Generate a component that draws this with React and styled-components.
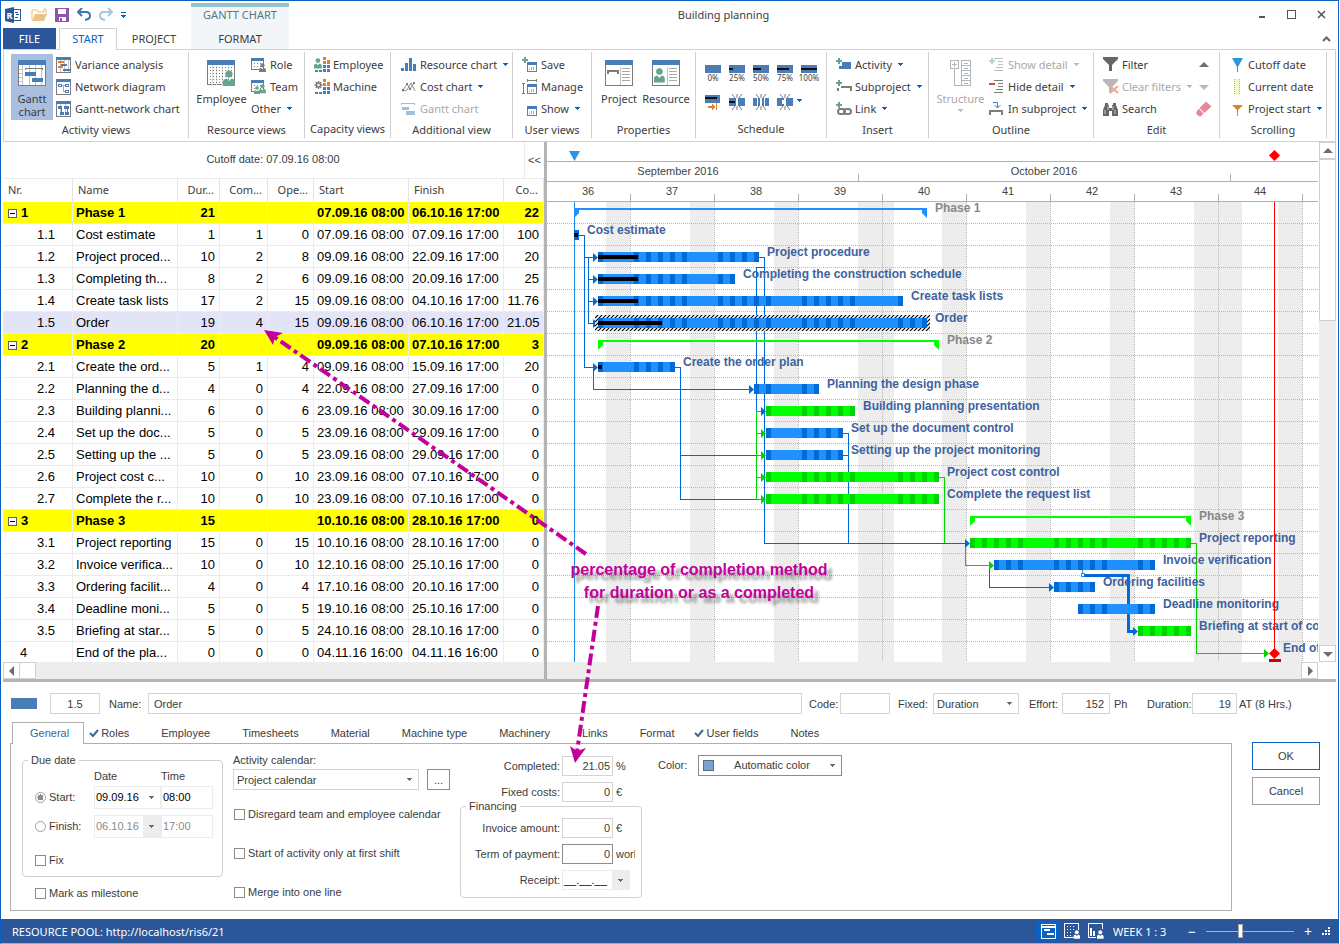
import React, { useState } from "react";
import styled, { createGlobalStyle } from "styled-components";

const UI_FONT = `"Noto Sans", "Open Sans", sans-serif`;
const FORM_FONT = `"Liberation Sans", Arial, sans-serif`;

const GlobalStyle = createGlobalStyle`
  * {
    box-sizing: border-box;
  }
  body {
    margin: 0;
    background: #fff;
    color: #3c3c3c;
    font-family: ${UI_FONT};
    font-size: 11px;
  }
  button, input, select {
    font: inherit;
    color: inherit;
    margin: 0;
    padding: 0;
    border: 0;
    border-radius: 0;
    background: none;
    outline: none;
  }
`;

/* ---------- window ---------- */

const Window = styled.div`
  position: relative;
  display: flex;
  flex-direction: column;
  min-height: 100vh;
  margin-right: 1px;
  border: 1px solid #0a62c4;
  border-bottom-color: #8fb0df;
  overflow: hidden;
`;

const Svg = styled.svg.attrs({ shapeRendering: "crispEdges" })`
  display: block;
  flex: none;
`;

const SmoothSvg = styled.svg`
  display: block;
  flex: none;
`;

const Header = styled.header`
  display: flex;
  height: 48px;
  padding: 0 2px;
`;

const HeaderLeft = styled.div`
  display: flex;
  flex-direction: column;
  width: 188px;
`;

const QuickBar = styled.div`
  display: flex;
  align-items: center;
  gap: 8px;
  height: 27px;
  padding-left: 2px;
`;

const QuickButton = styled.button`
  width: ${(p) => p.$width || 14}px;
`;

const RibbonTabs = styled.nav`
  display: flex;
  height: 21px;
`;

const RibbonTab = styled.button`
  font-size: 11px;
  line-height: 20px;
`;

const FileTab = styled(RibbonTab)`
  width: 53px;
  color: #fff;
  background: #2b579a;
`;

const ActiveTab = styled(RibbonTab)`
  position: relative;
  width: 58px;
  height: 22px;
  margin-left: 3px;
  padding-bottom: 2px;
  border: 1px solid #d0d0d0;
  border-bottom: 0;
  color: #0a62c4;
  background: #fff;
`;

const PlainTab = styled(RibbonTab)`
  width: 74px;
`;

const ContextTab = styled.div`
  display: flex;
  flex-direction: column;
  align-items: center;
  width: 98px;
  margin-top: 2px;
  border-top: 4px solid #98c2d0;
  background: #f2f6f9;
`;

const ContextTitle = styled.span`
  height: 22px;
  line-height: 15px;
  color: #5a7684;
`;

const Title = styled.div`
  flex: 1;
  padding-top: 6px;
  line-height: 16px;
  text-align: center;
`;

const HeaderRight = styled.div`
  display: flex;
  flex-direction: column;
  align-items: flex-end;
  justify-content: space-between;
  width: 178px;
  padding: 8px 5px 7px 0;
`;

const WindowButtons = styled.div`
  display: flex;
  align-items: center;
  gap: 21px;
  padding-right: 5px;
`;

/* ---------- ribbon ---------- */

const RibbonBar = styled.section`
  display: flex;
  height: 93px;
  margin: 0 2px;
  padding: 2px 0 3px;
  border: 1px solid #d0d0d0;
`;

const Group = styled.div`
  display: flex;
  flex-direction: column;
  flex: 0 0 ${(p) => p.$width}px;
  border-right: 1px solid #d0d0d0;
  padding-top: 2px;
`;

const GroupBody = styled.div`
  display: flex;
  gap: ${(p) => p.$gap || 3}px;
  height: 66px;
  padding-left: ${(p) => p.$pad}px;
`;

const GroupTitle = styled.div`
  line-height: 19px;
  text-align: center;
`;

const BigButton = styled.button`
  display: flex;
  flex-direction: column;
  align-items: center;
  gap: 6px;
  width: ${(p) => p.$width}px;
  height: 66px;
  padding-top: 6px;
  line-height: 13px;
  white-space: nowrap;
  background: ${(p) => (p.$active ? "#aabfe0" : "none")};
  color: ${(p) => (p.disabled ? "#a8a8a8" : "inherit")};
`;

const BigLabel = styled.span`
  display: flex;
  flex-direction: column;
  align-items: center;
  gap: 4px;
  text-align: center;
`;

const ToolColumn = styled.div`
  display: flex;
  flex-direction: column;
  flex: none;
`;

const ToolButton = styled.button`
  display: flex;
  align-items: center;
  gap: 3px;
  height: 22px;
  padding-bottom: 1px;
  white-space: nowrap;
  color: ${(p) => (p.disabled ? "#a8a8a8" : "inherit")};
`;

const IconSlot = styled.span`
  display: flex;
  justify-content: ${(p) => (p.$center ? "center" : "flex-start")};
  width: 16px;
`;

const ToolCaret = styled.span`
  padding-left: 3px;
`;

const StepGrid = styled.div`
  display: grid;
  grid-template-columns: repeat(5, 24px);
  grid-template-rows: 29px 22px;
  padding-top: 7px;
`;

const StepButton = styled.button`
  display: flex;
  flex-direction: column;
  align-items: center;
  font-size: 8px;
  line-height: 10px;
  padding-top: 4px;
`;

const EditSide = styled.div`
  display: grid;
  grid-template-rows: repeat(3, 22px);
  place-items: center;
  flex: 1;
  padding-right: 6px;
`;

/* ---------- table ---------- */

const Main = styled.main`
  display: flex;
  margin: 0 2px;
`;

const TablePane = styled.section`
  width: 541px;
`;

const CutoffBar = styled.div`
  display: flex;
  height: 36px;
  font-family: ${FORM_FONT};
  line-height: 35px;
  text-align: center;
`;

const CutoffText = styled.div`
  flex: 1;
  padding-left: 19px;
`;

const CollapseButton = styled.button`
  width: 20px;
  border-left: 1px solid #ececec;
`;

const Table = styled.table`
  width: 541px;
  table-layout: fixed;
  border-collapse: separate;
  border-spacing: 0;
`;

const Th = styled.th`
  height: 24px;
  padding: 0 5px 2px 5px;
  border-top: 1px solid #ececec;
  border-right: 1px solid #e4e4e4;
  font-weight: normal;
  line-height: 18px;
  text-align: ${(p) => (p.$right ? "right" : "left")};
`;

const Tr = styled.tr`
  font-family: ${FORM_FONT};
  font-size: 13px;
  color: #000;
  font-weight: ${(p) => (p.$phase ? "bold" : "normal")};
  background: ${(p) => (p.$phase ? "#ff0" : p.$selected ? "#e4e4f8" : "#fff")};
`;

const Td = styled.td`
  height: 22px;
  padding: 1px 4px 0 3px;
  border-right: 1px solid #ececec;
  border-bottom: 1px solid #ececec;
  line-height: 20px;
  white-space: nowrap;
  overflow: hidden;
  text-align: ${(p) => (p.$right ? "right" : "left")};
  tr:last-child & {
    height: 20px;
    padding-top: 2px;
    border-bottom: 0;
    line-height: 18px;
  }
`;

const NumberCell = styled.div`
  display: flex;
  align-items: center;
  gap: 4px;
  padding-left: ${(p) => p.$indent}px;
`;

const Toggle = styled.button`
  display: flex;
  align-items: center;
  justify-content: center;
  width: 9px;
  height: 9px;
  border: 1px solid #5c5c80;
  background: #fff;
  &::before {
    content: "";
    width: 5px;
    height: 1px;
    background: #000;
  }
`;

const Splitter = styled.div`
  width: 3px;
  background: #b4b4b4;
`;

const BottomSplitter = styled.div`
  height: 3px;
  margin: 0 2px;
  background: #b4b4b4;
`;

/* ---------- scroll bars ---------- */

const HScroll = styled.div`
  display: flex;
  justify-content: ${(p) => (p.$end ? "flex-end" : "flex-start")};
  height: 17px;
  background: #ededed;
`;

const VScroll = styled.div`
  display: flex;
  flex-direction: column;
  width: 17px;
  margin: 0 0 17px 1px;
  background: #ededed;
`;

const ScrollButton = styled.button`
  display: flex;
  align-items: center;
  justify-content: center;
  width: 17px;
  height: 17px;
  border: 1px solid #d0d0d0;
  background: #fff;
`;

const HThumb = styled.div`
  width: 16px;
  border: 1px solid #d0d0d0;
  border-left: 0;
  background: #fff;
`;

const VThumb = styled.div`
  height: 162px;
  border: 1px solid #d0d0d0;
  background: #fff;
`;

const Spring = styled.div`
  flex: 1;
`;

/* ---------- gantt ---------- */

const ChartPane = styled.section`
  flex: 1;
  min-width: 0;
  overflow: hidden;
`;

const ChartSvg = styled.svg`
  display: block;
  width: 100%;
  font-family: ${FORM_FONT};
`;

/* ---------- details ---------- */

const Details = styled.section`
  display: flex;
  flex-direction: column;
  flex: 1;
  margin: 0 2px;
  padding: 11px 0 8px 7px;
  font-family: ${FORM_FONT};
`;

const TopFields = styled.div`
  display: flex;
  align-items: center;
  height: 21px;
  padding-left: 1px;
`;

const Swatch = styled.span`
  width: 26px;
  height: 11px;
  margin-right: 13px;
  background: #4a7db5;
`;

const FieldLabel = styled.label`
  flex: none;
  width: ${(p) => p.$width}px;
  margin-left: ${(p) => p.$gap}px;
  white-space: nowrap;
`;

const Unit = styled.span`
  width: ${(p) => p.$width}px;
  padding-left: ${(p) => p.$pad}px;
  white-space: nowrap;
`;

const TextBox = styled.input`
  flex: ${(p) => (p.$width ? "none" : 1)};
  width: ${(p) => (p.$width ? `${p.$width}px` : "auto")};
  min-width: 0;
  height: 21px;
  padding: 0 5px;
  border: 1px solid ${(p) => p.$border || "#d4d4d4"};
  text-align: ${(p) => p.$align || "left"};
`;

const SelectFrame = styled.span`
  display: flex;
  align-items: center;
  width: ${(p) => p.$width}px;
  height: 21px;
  padding: 0 6px 0 3px;
  border: 1px solid ${(p) => p.$border || "#d4d4d4"};
`;

const Select = styled.select`
  flex: 1;
  min-width: 0;
  appearance: none;
  text-align: ${(p) => p.$align || "left"};
  text-align-last: ${(p) => p.$align || "left"};
`;

const ColorChip = styled.span`
  width: 11px;
  height: 11px;
  margin-left: 1px;
  border: 1px solid #5a6a80;
  background: #7da0d0;
`;

const DetailBody = styled.div`
  display: flex;
  gap: 20px;
  flex: 1;
  padding-top: 8px;
`;

const TabArea = styled.div`
  display: flex;
  flex-direction: column;
  flex: 1;
`;

const TabStrip = styled.nav`
  display: flex;
  height: 21px;
  padding-left: 2px;
`;

const Tab = styled.button`
  display: flex;
  align-items: center;
  gap: 2px;
  height: 22px;
  padding: 0 15px 0 ${(p) => (p.$checked ? 5 : 17)}px;
  white-space: nowrap;
`;

const CurrentTab = styled(Tab)`
  position: relative;
  padding: 0 14px 1px 17px;
  border: 1px solid #b0b0b0;
  border-bottom: 0;
  color: #40649c;
  background: #fff;
`;

const TabPanel = styled.div`
  display: flex;
  flex: 1;
  min-height: 168px;
  padding: 10px 11px 0;
  border: 1px solid #b0b0b0;
`;

const Column = styled.div`
  display: flex;
  flex-direction: column;
  width: ${(p) => p.$width}px;
  margin-right: 10px;
`;

const Fieldset = styled.fieldset`
  min-width: 0;
  margin: 0;
  padding: 0;
  border: 1px solid #d0d0d0;
  border-radius: 4px;
`;

const Legend = styled.legend`
  margin-left: 5px;
  padding: 0 3px;
  line-height: ${(p) => p.$line || 12}px;
`;

const DueGrid = styled.div`
  display: grid;
  grid-template-columns: 59px 67px 52px;
  grid-template-rows: 20px 22px 36px 32px;
  align-items: center;
  padding-left: 12px;
`;

const CheckLabel = styled.label`
  display: flex;
  align-items: center;
  gap: 3px;
  height: ${(p) => p.$height || 22}px;
  padding-left: ${(p) => p.$pad || 0}px;
  white-space: nowrap;
`;

const OptionList = styled.div`
  display: grid;
  gap: 17px;
  padding-left: 1px;
`;

const Check = styled.input.attrs({ type: "checkbox" })`
  appearance: none;
  width: 11px;
  height: 11px;
  border: 1px solid #8c8c8c;
`;

const Radio = styled.input.attrs({ type: "radio" })`
  appearance: none;
  width: 11px;
  height: 11px;
  border: 1px solid #a0a0a0;
  border-radius: 50%;
  &:checked {
    background: radial-gradient(circle, #8c8c8c 0 3px, #fff 3px);
  }
`;

const DateBox = styled.span`
  display: flex;
  height: 23px;
  border: 1px solid #ececec;
  color: ${(p) => (p.$off ? "#8a8a8a" : "#000")};
`;

const DateInput = styled.input`
  flex: 1;
  width: 0;
  min-width: 0;
  padding-left: 1px;
`;

const DropButton = styled.button`
  display: flex;
  align-items: center;
  justify-content: center;
  width: 17px;
  background: ${(p) => (p.$off ? "#ededed" : "#fff")};
`;

const CalendarLabel = styled.label`
  line-height: 12px;
`;

const CalendarRow = styled.div`
  display: flex;
  justify-content: space-between;
  margin: 3px 0 13px;
`;

const MoreButton = styled.button`
  width: 23px;
  border: 1px solid #8c8c8c;
`;

const AmountRow = styled.div`
  display: grid;
  grid-template-columns: ${(p) => p.$label || 101}px 51px 1fr;
  align-items: center;
  column-gap: 1px;
  height: 20px;
  margin-bottom: 6px;
  white-space: nowrap;
`;

const AmountLabel = styled.label`
  padding-right: 1px;
  text-align: right;
`;

const AmountBox = styled(TextBox)`
  height: 20px;
  padding-right: 2px;
`;

const AmountUnit = styled.span`
  width: 21px;
  padding-left: 2px;
  overflow: hidden;
`;

const ReceiptBox = styled(DateBox)`
  width: 68px;
  height: 20px;
`;

const MoneyFieldset = styled(Fieldset)`
  margin-top: -6px;
  height: 96px;
`;

const MoneyRows = styled.div`
  padding-top: ${(p) => p.$top}px;
`;

const ColorField = styled.div`
  display: flex;
  align-items: center;
  height: 22px;
  padding-left: 6px;
`;

const DialogButtons = styled.div`
  display: flex;
  flex-direction: column;
  gap: 7px;
  padding: 20px 16px 0 0;
`;

const DialogButton = styled.button`
  width: 68px;
  height: 28px;
  border: 1px solid ${(p) => (p.$primary ? "#0a62c4" : "#a0a0a0")};
`;

/* ---------- status bar ---------- */

const StatusBar = styled.footer`
  display: flex;
  align-items: center;
  height: 24px;
  padding: 0 6px 0 11px;
  color: #fff;
  background: #2b579a;
`;

const StatusButton = styled.button`
  display: flex;
  align-items: center;
  justify-content: center;
  width: 24px;
  height: 20px;
  background: ${(p) => (p.$active ? "#0a62c4" : "none")};
`;

const Scale = styled.span`
  width: 70px;
  padding-left: 5px;
  display: flex;
  align-items: center;
  justify-content: space-between;
`;

const ZoomButton = styled.button`
  width: 28px;
  font-size: 14px;
`;

const ZoomSlider = styled.input.attrs({ type: "range" })`
  appearance: none;
  width: 88px;
  height: 14px;
  background: linear-gradient(#9db4d6, #9db4d6) center / 100% 1px no-repeat;
  &::-webkit-slider-thumb {
    appearance: none;
    width: 5px;
    height: 14px;
    border: 1px solid #a8a8a8;
    background: #fff;
  }
`;

/* ---------- callout over the window ---------- */

const CalloutArrows = styled.svg`
  position: absolute;
  left: -1px;
  top: -1px;
  width: 700px;
  height: 800px;
  pointer-events: none;
`;

const CalloutText = styled.div`
  position: absolute;
  left: 558px;
  top: 557px;
  width: 280px;
  color: #c4009c;
  font-family: ${FORM_FONT};
  font-size: 16px;
  font-weight: bold;
  line-height: 23px;
  text-align: center;
  text-shadow: 5px 5px 3px rgba(0, 0, 0, 0.4);
  white-space: nowrap;
  pointer-events: none;
`;

/* ---------- icons ---------- */

const BLUE = "#4a7db5";
const GRAY = "#7c7c7c";
const GREEN = "#66a58c";
const ORANGE = "#e57e24";

const Caret = ({ color = "#0a62c4" }) => (
  <Svg width="5" height="3">
    <path d="M0 0h5v1h-1v1h-1v1h-1v-1h-1v-1h-1z" fill={color} />
  </Svg>
);

const Triangle = ({ dir, color = "#6e6e6e" }) => {
  const shapes = {
    up: "M0 7L5 2L10 7z",
    down: "M0 3H10L5 8z",
    left: "M2 5L7 0V10z",
    right: "M8 5L3 0V10z",
  };
  return (
    <SmoothSvg width="10" height="10">
      <path d={shapes[dir]} fill={color} />
    </SmoothSvg>
  );
};

const Frame = ({ w, h, head, children }) => (
  <Svg width={w} height={h}>
    <rect x=".5" y=".5" width={w - 1} height={h - 1} fill="#fff" stroke={GRAY} />
    {children}
    <rect width={w} height={head} fill={BLUE} />
  </Svg>
);

const Person = ({ x, y, s = 1, color = GREEN }) => (
  <g transform={`translate(${x} ${y}) scale(${s})`} shapeRendering="auto" fill={color}>
    <circle cx="6" cy="4" r="3.6" />
    <path d="M0 16V12Q0 9 3.5 8.4L6 11L8.500 8.4Q12 9 12 12V16z" />
  </g>
);

const GanttBig = () => (
  <Frame w={28} h={26} head={5}>
    <path d="M4.500 5v20M11.500 5v20M17.500 5v20M23.500 5v20M1 9.500h3M1 13.500h3M1 17.500h3M1 21.500h3" stroke="#c4c4c4" />
    <path d="M7.500 10V8.500H24.500V10" fill="none" stroke={GRAY} />
    <rect x="7" y="12" width="11" height="4" fill={BLUE} />
    <rect x="14" y="18" width="11" height="4" fill={BLUE} />
  </Frame>
);

const VarianceIcon = () => (
  <Frame w={15} h={16} head={3}>
    <path d="M4.500 3v12M8.500 3v12M12.500 3v12" stroke="#c4c4c4" />
    <rect x="2" y="4" width="6" height="2" fill={ORANGE} />
    <rect x="5" y="7" width="6" height="2" fill={BLUE} />
    <rect x="2" y="9" width="5" height="2" fill={ORANGE} />
    <rect x="7" y="12" width="7" height="2" fill={BLUE} />
  </Frame>
);

const NetworkIcon = () => (
  <Frame w={15} h={16} head={3}>
    <path d="M5 6.500h4M7.500 6v7M7 12.500h2" stroke="#aaa" fill="none" />
    <rect x="2.500" y="5.500" width="3" height="2" fill="#fff" stroke={BLUE} />
    <rect x="9.500" y="5.500" width="3" height="2" fill="#fff" stroke={BLUE} />
    <rect x="9.500" y="11.500" width="3" height="2" fill="#fff" stroke={BLUE} />
  </Frame>
);

const GanttNetIcon = () => (
  <Frame w={15} h={16} head={3}>
    <path d="M4.500 3v12M9.500 3v12" stroke="#c4c4c4" />
    <path d="M2 5h4v3H2zM8 5h5v3H8zM4 11h4v3H4zM9 11h4v3H9zM5 8h1v3H5zM11 8h1v3h-1z" fill={BLUE} />
  </Frame>
);

const dots = (w, h, step, top) => {
  const out = [];
  for (let y = top; y < h - 2; y += step)
    for (let x = 3; x < w - 2; x += step) out.push(`M${x} ${y}h1v1h-1z`);
  return out.join("");
};

const EmployeeBig = () => (
  <Svg width="29" height="26">
    <rect x=".5" y=".5" width="27" height="24" fill="#fff" stroke={GRAY} />
    <path d="M5.500 5v20M9.500 5v20M15.500 5v20M21.500 5v20" stroke="#dcdcdc" />
    <path d={dots(28, 26, 3, 7)} fill={GRAY} />
    <rect width="28" height="5" fill={BLUE} />
    <Person x={16} y={10} />
  </Svg>
);

const RoleIcon = ({ team }) => (
  <Svg width="15" height="14">
    <rect x=".5" y=".5" width="12" height="11" fill="#fff" stroke={GRAY} />
    <path d={dots(13, 12, 3, 5)} fill={GRAY} />
    <rect width="13" height="3" fill={BLUE} />
    {team && <Person x={3} y={6} s={0.5} />}
    <Person x={8} y={team ? 4 : 5} s={0.58} color={team ? GREEN : GRAY} />
  </Svg>
);

const CapacityIcon = ({ machine }) => (
  <Svg width="16" height="16">
    {machine ? (
      <g shapeRendering="auto">
        <path d="M4.500 2v8M.5 6h8M1.700 3.200l5.600 5.600M7.300 3.200l-5.600 5.600" stroke={GRAY} strokeWidth="1.500" />
        <circle cx="4.500" cy="6" r="2" fill="#fff" stroke={GRAY} strokeWidth="1.500" />
      </g>
    ) : (
      <Person x={0} y={1} s={0.65} />
    )}
    <path d="M9 0h3v3H9zM9 4h3v3H9zM13 3h3v4h-3z" fill={ORANGE} />
    <path d="M9 8h3v3H9zM13 8h3v3h-3zM1 13h3v2H1zM5 13h3v2H5zM9 12h3v3H9zM13 12h3v3h-3z" fill={BLUE} />
  </Svg>
);

const ColumnsIcon = () => (
  <Svg width="15" height="13">
    <path d="M0 10h3v3H0zM4 5h3v8H4zM8 0h3v13H8zM12 6h3v7h-3z" fill={BLUE} />
  </Svg>
);

const CostIcon = () => (
  <SmoothSvg width="15" height="13">
    <path d="M2 10L6 4L9 9L13 3M1 11L6 10L10 3L14 11" fill="none" stroke="#8c8c8c" />
    <path d="M1 9h2v2H1zM5 3h2v2H5zM8 8h2v2H8zM12 2h2v2h-2z" fill={GRAY} />
  </SmoothSvg>
);

const GanttChartIcon = () => (
  <Svg width="15" height="12">
    <path d="M.5 2V.5H13.500V2" fill="none" stroke="#b8b8b8" />
    <path d="M1 4h7v3H1zM5 8h9v4H5z" fill="#a3c0dc" />
  </Svg>
);

const ViewIcon = ({ kind }) => (
  <Svg width="16" height="16">
    <rect x="5.500" y="6.500" width="9" height="8" fill="#fff" stroke={GRAY} />
    <rect x="5" y="5" width="10" height="3" fill={BLUE} />
    <path d="M7 12h1v1H7zM9 10h1v3H9zM11 10h1v3h-1z" fill="#9ab" />
    {kind === "save" && <path d="M2 0h2v2h2v2H4v2H2V4H0V2h2z" fill={GREEN} />}
    {kind === "manage" && (
      <path d="M5.500 0v3M14.500 0v3M5 1.500h10M0 4.500h3M1.500 4v11M0 14.500h3" stroke={GRAY} fill="none" />
    )}
  </Svg>
);

const ProjectBig = ({ person }) => (
  <Frame w={28} h={26} head={5}>
    {person ? <Person x={2} y={8} s={0.9} /> : (
      <path d="M2 10h12v4h-2v-2H4v2H2z" fill={GRAY} />
    )}
    <path d="M15.500 7v18" stroke="#c4c4c4" />
    <path d="M17 8.500h8M17 11.500h8M17 14.500h8M17 17.500h8M17 20.500h8" stroke="#aaa" />
  </Frame>
);

const StepIcon = ({ done }) => (
  <Svg width="16" height="8">
    <rect width="16" height="8" fill={BLUE} />
    <rect y="3" width={(done * 16) / 100} height="2" fill="#111" />
  </Svg>
);

const MoveIcon = () => (
  <Svg width="16" height="16">
    <rect width="15" height="8" y="1" fill={BLUE} />
    <rect y="3" width="12" height="2" fill="#111" />
    <path d="M11.500 9v7" stroke={ORANGE} />
    <path d="M3 12h4v-2l4 3l-4 3v-2H3z" fill={ORANGE} />
  </Svg>
);

const SplitIcon = ({ kind }) => (
  <Svg width="16" height="16">
    <path d="M3 0l3 4M8 0v4M13 0l-3 4M3 16l3-4M8 16v-4M13 16l-3-4" stroke={GRAY} shapeRendering="auto" />
    <path d="M0 4h7v8H0zM9 4h7v8H9z" fill={BLUE} />
    {kind === 0 && <rect y="7" width="6" height="2" fill="#111" />}
    {kind === 1 && <path d="M4 4h1v8H4zM11 4h1v8h-1z" fill="#fff" />}
    {kind === 2 && <path d="M5 6h4v4H5z" fill="#fff" />}
  </Svg>
);

const InsertIcon = ({ kind }) => (
  <Svg width="16" height="14">
    {kind === "activity" && <path d="M6 4h9v7H3V8h3z" fill={BLUE} />}
    {kind === "sub" && <path d="M5 6h11v5h-2V8H3v3H1V8h4z" fill={GRAY} />}
    {kind === "link" && (
      <g fill="none" stroke={GRAY} strokeWidth="2" shapeRendering="auto">
        <rect x="2" y="7" width="7" height="5" rx="2.500" />
        <rect x="8" y="7" width="7" height="5" rx="2.500" />
      </g>
    )}
    <path d="M2 0h2v2h2v2H4v2H2V4H0V2h2z" fill={GREEN} />
  </Svg>
);

const StructureBig = () => (
  <Svg width="21" height="26" fill="none" stroke="#b4b4b4">
    <rect x=".5" y=".5" width="8" height="8" />
    <path d="M4.500 2v5M2 4.500h5M4.500 9v16.500h7" />
    <path d="M11.500 .5h9v25h-9zM12 5.500h8M12 10.500h8M12 15.500h8M12 20.500h8" />
    <path d="M14 3.500h4M14 8.500h4M14 13.500h4M14 18.500h4M14 23.500h4" stroke="#9ab8d8" />
  </Svg>
);

const DetailIcon = ({ hide }) => (
  <Svg width="14" height="14">
    <path d="M5 .5h9M9 3.500h5M9 6.500h5M7 9.500h7M5 12.500h9" stroke={hide ? GRAY : "#c0c0c0"} />
    {hide ? <rect y="3" width="6" height="2" fill="#d0502c" /> : (
      <path d="M2 0h2v2h2v2H4v2H2V4H0V2h2z" fill="#b4d4c6" />
    )}
  </Svg>
);

const SubprojectIcon = () => (
  <Svg width="14" height="15">
    <path d="M0 9h14v5h-2v-3H2v3H0z" fill={GRAY} />
    <path d="M4 1.500h4.500V7M5.500 4l3 3l3-3" stroke={BLUE} fill="none" shapeRendering="auto" />
  </Svg>
);

const FunnelIcon = ({ off }) => (
  <SmoothSvg width="16" height="15">
    <path d="M0 0H15V2L9 8V14H6V8L0 2z" fill={off ? "#b8b8b8" : "#666"} />
    {off && <path d="M7 7L15 14M15 7L7 14" stroke="#eeaa96" strokeWidth="2" />}
  </SmoothSvg>
);

const BinocularsIcon = () => (
  <SmoothSvg width="15" height="14">
    <path d="M2 1h3v2h1v3h3V3h1V1h3v2l2 5v6H9V9H6v5H0V8l2-5z" fill="#666" />
    <path d="M2 8v4M5 4v4M10 4v4M12 8v4" stroke="#ccc" />
  </SmoothSvg>
);

const EraserIcon = () => (
  <SmoothSvg width="16" height="16">
    <path d="M10 .5L15.500 5.500L8.500 12L3.500 7z" fill="#e8869a" />
    <path d="M3 7.800L7.500 12.500L4.500 15.500Q3 16 0 12.500Q0 10.500 3 7.800z" fill="#e8869a" />
  </SmoothSvg>
);

const PinIcon = ({ color, small }) => (
  <SmoothSvg width="11" height="14">
    <path d={small ? "M0 3H11L6 8V14H5V8z" : "M0 0H11L6 9V14H5V9z"} fill={color} />
  </SmoothSvg>
);

const TodayIcon = () => (
  <Svg width="6" height="16">
    <rect width="6" height="16" fill="#f2f8c8" />
    <path d="M.5 0v16M5.500 0v16" stroke="#b0b0b0" strokeDasharray="1 1" />
  </Svg>
);

const AppIcon = () => (
  <SmoothSvg width="16" height="16">
    <rect x="8" y="2" width="8" height="12" fill="#2b579a" />
    <rect x="9" y="3" width="6" height="10" fill="#fff" />
    <path d="M10 5.500h3M11 7.500h3M10 10.500h3" stroke="#2b579a" />
    <path d="M0 2L9 0V16L0 14z" fill="#2b579a" />
    <text x="1.500" y="11.500" fontSize="9" fontWeight="bold" fill="#fff">R</text>
  </SmoothSvg>
);

const FolderIcon = () => (
  <SmoothSvg width="17" height="14">
    <path d="M1 12V2h5l1 2h6V1h2v5" fill="#fff" stroke="#e8c07c" />
    <path d="M4 6H16L13 13H1z" fill="#ecc486" />
  </SmoothSvg>
);

const SaveIcon = () => (
  <Svg width="14" height="14">
    <path d="M0 0h14v14H0z" fill="#8c55aa" />
    <path d="M3 1h8v5H3zM4 9h7v4H4z" fill="#fff" />
    <rect x="5" y="10" width="2" height="3" fill="#8c55aa" />
  </Svg>
);

const UndoIcon = ({ redo }) => (
  <SmoothSvg width="14" height="13">
    <g transform={redo ? "translate(14 0) scale(-1 1)" : undefined} stroke={redo ? "#aac4de" : "#3c78b8"} fill="none" strokeWidth="2">
      <path d="M5 0L1 4L5 8" />
      <path d="M1 4H9Q13 4 13 8Q13 11 8 12" />
    </g>
  </SmoothSvg>
);

const TickIcon = () => (
  <SmoothSvg width="10" height="8">
    <path d="M1 4L4 7L9 1" fill="none" stroke="#40688c" strokeWidth="2" />
  </SmoothSvg>
);

/* ---------- ribbon parts ---------- */

const Tool = ({ icon, label, caret, off, center }) => (
  <ToolButton disabled={off}>
    {icon && <IconSlot $center={center}>{icon}</IconSlot>}
    {label}
    {caret && (
      <ToolCaret>
        <Caret color={off ? "#b8b8b8" : undefined} />
      </ToolCaret>
    )}
  </ToolButton>
);

const RibbonGroup = ({ title, width, pad, gap, children }) => (
  <Group $width={width}>
    <GroupBody $pad={pad} $gap={gap}>
      {children}
    </GroupBody>
    <GroupTitle>{title}</GroupTitle>
  </Group>
);

const Ribbon = () => (
  <RibbonBar>
    <RibbonGroup title="Activity views" width={185} pad={7}>
      <BigButton $width={42} $active>
        <GanttBig />
        <BigLabel>
          <span>Gantt<br />chart</span>
        </BigLabel>
      </BigButton>
      <ToolColumn>
        <Tool icon={<VarianceIcon />} label="Variance analysis" />
        <Tool icon={<NetworkIcon />} label="Network diagram" />
        <Tool icon={<GanttNetIcon />} label="Gantt-network chart" />
      </ToolColumn>
    </RibbonGroup>
    <RibbonGroup title="Resource views" width={116} pad={8} gap={5}>
      <BigButton $width={49}>
        <EmployeeBig />
        <BigLabel>Employee</BigLabel>
      </BigButton>
      <ToolColumn>
        <Tool icon={<RoleIcon />} label="Role" />
        <Tool icon={<RoleIcon team />} label="Team" />
        <Tool label="Other" caret />
      </ToolColumn>
    </RibbonGroup>
    <RibbonGroup title="Capacity views" width={86} pad={9}>
      <ToolColumn>
        <Tool icon={<CapacityIcon />} label="Employee" />
        <Tool icon={<CapacityIcon machine />} label="Machine" />
      </ToolColumn>
    </RibbonGroup>
    <RibbonGroup title="Additional view" width={122} pad={10}>
      <ToolColumn>
        <Tool icon={<ColumnsIcon />} label="Resource chart" caret />
        <Tool icon={<CostIcon />} label="Cost chart" caret />
        <Tool icon={<GanttChartIcon />} label="Gantt chart" off />
      </ToolColumn>
    </RibbonGroup>
    <RibbonGroup title="User views" width={79} pad={9}>
      <ToolColumn>
        <Tool icon={<ViewIcon kind="save" />} label="Save" />
        <Tool icon={<ViewIcon kind="manage" />} label="Manage" />
        <Tool icon={<ViewIcon />} label="Show" caret />
      </ToolColumn>
    </RibbonGroup>
    <RibbonGroup title="Properties" width={104} pad={8} gap={4}>
      <BigButton $width={38}>
        <ProjectBig />
        <BigLabel>Project</BigLabel>
      </BigButton>
      <BigButton $width={48}>
        <ProjectBig person />
        <BigLabel>Resource</BigLabel>
      </BigButton>
    </RibbonGroup>
    <RibbonGroup title="Schedule" width={131} pad={5}>
      <StepGrid>
        {[0, 25, 50, 75, 100].map((n) => (
          <StepButton key={n}>
            <StepIcon done={n} />
            {n}%
          </StepButton>
        ))}
        <StepButton aria-label="Move"><MoveIcon /></StepButton>
        {[0, 1, 2].map((n) => (
          <StepButton key={n} aria-label="Split"><SplitIcon kind={n} /></StepButton>
        ))}
        <ToolButton aria-label="More"><Caret /></ToolButton>
      </StepGrid>
    </RibbonGroup>
    <RibbonGroup title="Insert" width={102} pad={9}>
      <ToolColumn>
        <Tool icon={<InsertIcon kind="activity" />} label="Activity" caret />
        <Tool icon={<InsertIcon kind="sub" />} label="Subproject" caret />
        <Tool icon={<InsertIcon kind="link" />} label="Link" caret />
      </ToolColumn>
    </RibbonGroup>
    <RibbonGroup title="Outline" width={165} pad={8} gap={5}>
      <BigButton $width={47} disabled>
        <StructureBig />
        <BigLabel>
          Structure
          <Caret color="#b8b8b8" />
        </BigLabel>
      </BigButton>
      <ToolColumn>
        <Tool icon={<DetailIcon />} label="Show detail" caret off />
        <Tool icon={<DetailIcon hide />} label="Hide detail" caret />
        <Tool icon={<SubprojectIcon />} label="In subproject" caret />
      </ToolColumn>
    </RibbonGroup>
    <RibbonGroup title="Edit" width={126} pad={9}>
      <ToolColumn>
        <Tool icon={<FunnelIcon />} label="Filter" />
        <Tool icon={<FunnelIcon off />} label="Clear filters" caret off />
        <Tool icon={<BinocularsIcon />} label="Search" />
      </ToolColumn>
      <EditSide>
        <button aria-label="Previous"><Triangle dir="up" /></button>
        <button aria-label="Next"><Triangle dir="down" color="#b8b8b8" /></button>
        <button aria-label="Erase"><EraserIcon /></button>
      </EditSide>
    </RibbonGroup>
    <RibbonGroup title="Scrolling" width={107} pad={9}>
      <ToolColumn>
        <Tool icon={<PinIcon color="#2e93e0" />} label="Cutoff date" center />
        <Tool icon={<TodayIcon />} label="Current date" center />
        <Tool icon={<PinIcon color={ORANGE} small />} label="Project start" caret center />
      </ToolColumn>
    </RibbonGroup>
  </RibbonBar>
);

/* ---------- activities ---------- */

const columns = [
  { title: "Nr.", width: 70 },
  { title: "Name", width: 105 },
  { title: "Dur...", width: 42, right: true },
  { title: "Com...", width: 48, right: true },
  { title: "Ope...", width: 46, right: true },
  { title: "Start", width: 95 },
  { title: "Finish", width: 95 },
  { title: "Co...", width: 40, right: true },
];

const activities = [
  ["1", "Phase 1", "21", "", "", "07.09.16 08:00", "06.10.16 17:00", "22"],
  ["1.1", "Cost estimate", "1", "1", "0", "07.09.16 08:00", "07.09.16 17:00", "100"],
  ["1.2", "Project proced...", "10", "2", "8", "09.09.16 08:00", "22.09.16 17:00", "20"],
  ["1.3", "Completing th...", "8", "2", "6", "09.09.16 08:00", "20.09.16 17:00", "25"],
  ["1.4", "Create task lists", "17", "2", "15", "09.09.16 08:00", "04.10.16 17:00", "11.76"],
  ["1.5", "Order", "19", "4", "15", "09.09.16 08:00", "06.10.16 17:00", "21.05"],
  ["2", "Phase 2", "20", "", "", "09.09.16 08:00", "07.10.16 17:00", "3"],
  ["2.1", "Create the ord...", "5", "1", "4", "09.09.16 08:00", "15.09.16 17:00", "20"],
  ["2.2", "Planning the d...", "4", "0", "4", "22.09.16 08:00", "27.09.16 17:00", "0"],
  ["2.3", "Building planni...", "6", "0", "6", "23.09.16 08:00", "30.09.16 17:00", "0"],
  ["2.4", "Set up the doc...", "5", "0", "5", "23.09.16 08:00", "29.09.16 17:00", "0"],
  ["2.5", "Setting up the ...", "5", "0", "5", "23.09.16 08:00", "29.09.16 17:00", "0"],
  ["2.6", "Project cost c...", "10", "0", "10", "23.09.16 08:00", "07.10.16 17:00", "0"],
  ["2.7", "Complete the r...", "10", "0", "10", "23.09.16 08:00", "07.10.16 17:00", "0"],
  ["3", "Phase 3", "15", "", "", "10.10.16 08:00", "28.10.16 17:00", "0"],
  ["3.1", "Project reporting", "15", "0", "15", "10.10.16 08:00", "28.10.16 17:00", "0"],
  ["3.2", "Invoice verifica...", "10", "0", "10", "12.10.16 08:00", "25.10.16 17:00", "0"],
  ["3.3", "Ordering facilit...", "4", "0", "4", "17.10.16 08:00", "20.10.16 17:00", "0"],
  ["3.4", "Deadline moni...", "5", "0", "5", "19.10.16 08:00", "25.10.16 17:00", "0"],
  ["3.5", "Briefing at star...", "5", "0", "5", "24.10.16 08:00", "28.10.16 17:00", "0"],
  ["4", "End of the pla...", "0", "0", "0", "04.11.16 16:00", "04.11.16 16:00", "0"],
];

const isPhase = (row) => row[1].startsWith("Phase");

const ActivityTable = () => {
  const [selected, setSelected] = useState("1.5");
  return (
    <Table>
      <colgroup>
        {columns.map((c) => (
          <col key={c.title} width={c.width} />
        ))}
      </colgroup>
      <thead>
        <tr>
          {columns.map((c) => (
            <Th key={c.title} $right={c.right}>{c.title}</Th>
          ))}
        </tr>
      </thead>
      <tbody>
        {activities.map((row) => {
          const phase = isPhase(row);
          const indent = phase ? 2 : row[0].includes(".") ? 31 : 14;
          return (
            <Tr key={row[0]} $phase={phase} $selected={row[0] === selected} onClick={() => setSelected(row[0])}>
              <Td>
                <NumberCell $indent={indent}>
                  {phase && <Toggle aria-label="Collapse" />}
                  {row[0]}
                </NumberCell>
              </Td>
              {row.slice(1).map((cell, i) => (
                <Td key={i} $right={columns[i + 1].right}>{cell}</Td>
              ))}
            </Tr>
          );
        })}
      </tbody>
    </Table>
  );
};

/* ---------- chart: 12 px a day, weeks start at x = 83 + 84 k ---------- */

const ROW = 22;
const DAY = 12;
const WEEK0 = -1;
const weeks = Array.from({ length: 24 }, (_, i) => WEEK0 + i * 84);
const holidays = [335, 671, 683];

const palette = {
  blue: { light: "#1e90ff", dark: "#006ad6" },
  green: { light: "#00ff00", dark: "#00d400" },
};

// day counts run from Monday 5 September 2016
const bars = [
  { row: 1, from: 2, to: 2, done: 4, tone: "blue", label: "Cost estimate" },
  { row: 2, from: 4, to: 17, done: 40, tone: "blue", label: "Project procedure" },
  { row: 3, from: 4, to: 15, done: 40, tone: "blue", label: "Completing the construction schedule" },
  { row: 4, from: 4, to: 29, done: 40, tone: "blue", label: "Create task lists" },
  { row: 5, from: 4, to: 31, done: 64, tone: "blue", label: "Order", selected: true },
  { row: 7, from: 4, to: 10, done: 4, tone: "blue", label: "Create the order plan" },
  { row: 8, from: 17, to: 22, tone: "blue", label: "Planning the design phase" },
  { row: 9, from: 18, to: 25, tone: "green", label: "Building planning presentation" },
  { row: 10, from: 18, to: 24, tone: "blue", label: "Set up the document control" },
  { row: 11, from: 18, to: 24, tone: "blue", label: "Setting up the project monitoring" },
  { row: 12, from: 18, to: 32, tone: "green", label: "Project cost control" },
  { row: 13, from: 18, to: 32, tone: "green", label: "Complete the request list" },
  { row: 15, from: 35, to: 53, tone: "green", label: "Project reporting" },
  { row: 16, from: 37, to: 50, tone: "blue", label: "Invoice verification" },
  { row: 17, from: 42, to: 45, tone: "blue", label: "Ordering facilities" },
  { row: 18, from: 44, to: 50, tone: "blue", label: "Deadline monitoring" },
  { row: 19, from: 49, to: 53, tone: "green", label: "Briefing at start of construction" },
];

const phases = [
  { row: 0, from: 2, to: 31, color: "#1e90ff", label: "Phase 1" },
  { row: 6, from: 4, to: 32, color: "#00ff00", label: "Phase 2" },
  { row: 14, from: 35, to: 53, color: "#00ff00", label: "Phase 3" },
];

const links = [
  ["blue", "M32 33.500H37.500V165.500H47M37.500 55.500H47M41.500 55.500V121.500H47M41.500 77.500H47M41.500 99.500H47"],
  ["blue", "M46.500 168V187.500H203"],
  ["blue", "M128 165.500H133.500V297.500H210M133.500 253.500H210"],
  ["blue", "M212 55.500H217.500V341.500H419M217 65.500H209.500V209"],
  ["blue", "M296 231.500H301.500V341M296 253.500H301"],
  ["green", "M215 209.500H209.500V297.500H215M210 231.500H215M210 253.500H215M210 275.500H215"],
  ["green", "M392 275.500H397.500V341"],
  ["green", "M422 341.500H418.500V363.500H443"],
  ["blue", "M442.500 363V385.500H503"],
  ["green", "M644 341.500H649.500V451.500H718"],
];

const arrows = [
  ["blue", 46, 55], ["blue", 46, 77], ["blue", 46, 99], ["blue", 46, 121], ["blue", 46, 165],
  ["blue", 202, 187], ["blue", 214, 209], ["green", 214, 231], ["green", 214, 253],
  ["green", 214, 275], ["green", 214, 297], ["blue", 418, 341], ["green", 442, 363],
  ["blue", 502, 385], ["blue", 586, 429], ["green", 717, 451],
];

const barStart = (day) => WEEK0 + day * DAY + 4;
const barEnd = (day) => WEEK0 + day * DAY + 9;

const isWorkday = (day) =>
  day % 7 < 5 && !holidays.includes(WEEK0 + day * DAY);

const workdays = (from, to) => {
  const days = [];
  for (let d = from; d <= to; d++) if (isWorkday(d)) days.push(d);
  return days;
};

const ChartHeader = () => (
  <ChartSvg height="60" fontSize="11" fill="#444" textAnchor="middle">
    <path d="M0 19.500H3000M0 39.500H3000M0 59.500H3000" stroke="#b0b0b0" />
    <path d="M311.500 32v7M683.500 32v7" stroke="#b0b0b0" />
    <path d="M22 9H33L27.500 19z" fill="#2e93e0" />
    <path d="M727.500 8L733 13.500L727.500 19L722 13.500z" fill="#f00" />
    <text x="131" y="33">September 2016</text>
    <text x="497" y="33">October 2016</text>
    {weeks.map((x) => (
      <path key={x} d={`M${x + 84}.5 52v7`} stroke="#b0b0b0" />
    ))}
    {weeks.slice(0, 9).map((x, i) => (
      <text key={x} x={x + 42} y="53">{36 + i}</text>
    ))}
  </ChartSvg>
);

const Bar = ({ bar }) => {
  const y = bar.row * ROW + 6;
  const x = barStart(bar.from);
  const end = barEnd(bar.to);
  const tone = palette[bar.tone];
  return (
    <g shapeRendering="crispEdges">
      {bar.selected && <rect x={x - 3} y={y - 3} width={end - x + 6} height="16" fill="url(#hatch)" />}
      <rect x={x} y={y} width={end - x} height="10" fill={tone.light} />
      {workdays(bar.from, bar.to).map((d) => (
        <rect key={d} x={barStart(d)} y={y} width="5" height="10" fill={tone.dark} />
      ))}
      {bar.done && <rect x={x} y={y + 3} width={bar.done} height="4" fill="#000" />}
    </g>
  );
};

const Chart = () => (
  <ChartSvg height="460" fontSize="12" fontWeight="bold">
    <defs>
      <pattern id="hatch" width="4" height="4" patternUnits="userSpaceOnUse">
        <rect width="4" height="4" fill="#fff" />
        <path d="M-1 5L5 -1M-1 1L1 -1M3 5L5 3" stroke="#000" strokeWidth="1.200" />
      </pattern>
    </defs>
    <g shapeRendering="crispEdges">
      {weeks.map((x) => (
        <rect key={x} x={x + 60} width="24" height="460" fill="#ededed" />
      ))}
      {holidays.map((x) => (
        <rect key={x} x={x} width="12" height="460" fill="#ededed" />
      ))}
      {weeks.map((x) => (
        <path key={x} d={`M${x + 84}.5 0V460`} stroke="#b8b8b8" strokeDasharray="1 1" />
      ))}
      {activities.slice(1).map((row, i) => (
        <path key={row[0]} d={`M0 ${i * ROW + 21}.5H3000`} stroke="#b8b8b8" strokeDasharray="1 1" />
      ))}
      <path d="M27.500 0V460" stroke="#1e8ce0" />
      {links.map(([tone, d]) => (
        <path key={d} d={d} fill="none" stroke={palette[tone].dark} />
      ))}
      <path d="M535.500 368v4M534 371.500h3v3h-3z" fill="#fff" stroke="#1e90ff" />
      <path d="M537 373.500H581.500V429.500H587" fill="none" stroke="#006ad6" strokeWidth="3" />
    </g>
    {arrows.map(([tone, x, y]) => (
      <path key={`${x}-${y}`} d={`M${x} ${y - 4}L${x + 5} ${y + 0.5}L${x} ${y + 5}z`} fill={palette[tone].dark} />
    ))}
    {phases.map((p) => {
      const a = barStart(p.from);
      const b = barEnd(p.to);
      const y = p.row * ROW + 6;
      return (
        <path
          key={p.label}
          d={`M${a} ${y}H${b}V${y + 10}L${b - 5} ${y + 5}V${y + 2}H${a + 5}V${y + 5}L${a} ${y + 10}z`}
          fill={p.color}
        />
      );
    })}
    {bars.map((bar) => (
      <Bar key={bar.label} bar={bar} />
    ))}
    {phases.map((p) => (
      <text key={p.label} x={barEnd(p.to) + 8} y={p.row * ROW + 10} fill="#888">{p.label}</text>
    ))}
    {bars.map((b) => (
      <text key={b.label} x={barEnd(b.to) + 8} y={b.row * ROW + 10} fill="#3e629e">{b.label}</text>
    ))}
    <text x="736" y="450" fill="#3e629e">End of the planning</text>
    <path d="M727.500 0V452" stroke="#f00" shapeRendering="crispEdges" />
    <path d="M727.500 446L733 451.500L727.500 457L722 451.500z" fill="#f00" />
    <rect x="722" y="457" width="12" height="3" fill="#d00000" />
  </ChartSvg>
);

/* ---------- details form ---------- */

const tabs = [
  { name: "Roles", checked: true },
  { name: "Employee" },
  { name: "Timesheets" },
  { name: "Material" },
  { name: "Machine type" },
  { name: "Machinery" },
  { name: "Links" },
  { name: "Format" },
  { name: "User fields", checked: true },
  { name: "Notes" },
];

const Amount = ({ id, label, value, unit, labelWidth, border }) => (
  <AmountRow $label={labelWidth}>
    <AmountLabel htmlFor={id}>{label}</AmountLabel>
    <AmountBox id={id} defaultValue={value} $width={51} $align="right" $border={border} />
    <AmountUnit>{unit}</AmountUnit>
  </AmountRow>
);

const DetailForm = () => (
  <Details>
    <TopFields>
      <Swatch />
      <TextBox aria-label="Number" defaultValue="1.5" $width={50} $align="center" />
      <FieldLabel htmlFor="name" $width={39} $gap={9}>Name:</FieldLabel>
      <TextBox id="name" defaultValue="Order" />
      <FieldLabel htmlFor="code" $width={31} $gap={7}>Code:</FieldLabel>
      <TextBox id="code" $width={50} />
      <FieldLabel htmlFor="fixed" $width={35} $gap={8}>Fixed:</FieldLabel>
      <SelectFrame $width={86}>
        <Select id="fixed"><option>Duration</option></Select>
        <Caret color="#6e6e6e" />
      </SelectFrame>
      <FieldLabel htmlFor="effort" $width={33} $gap={10}>Effort:</FieldLabel>
      <TextBox id="effort" defaultValue="152" $width={48} $align="right" />
      <Unit $width={37} $pad={4}>Ph</Unit>
      <FieldLabel htmlFor="duration" $width={45} $gap={0}>Duration:</FieldLabel>
      <TextBox id="duration" defaultValue="19" $width={45} $align="right" />
      <Unit $width={99} $pad={2}>AT (8 Hrs.)</Unit>
    </TopFields>
    <DetailBody>
      <TabArea>
        <TabStrip>
          <CurrentTab>General</CurrentTab>
          {tabs.map((t) => (
            <Tab key={t.name} $checked={t.checked}>
              {t.checked && <TickIcon />}
              {t.name}
            </Tab>
          ))}
        </TabStrip>
        <TabPanel>
          <Column $width={201}>
            <Fieldset>
              <Legend>Due date</Legend>
              <DueGrid>
                <span />
                <span>Date</span>
                <span>Time</span>
                <CheckLabel><Radio name="due" defaultChecked />Start:</CheckLabel>
                <DateBox>
                  <DateInput aria-label="Start date" defaultValue="09.09.16" />
                  <DropButton aria-label="Pick start date"><Caret color="#6e6e6e" /></DropButton>
                </DateBox>
                <DateBox><DateInput aria-label="Start time" defaultValue="08:00" /></DateBox>
                <CheckLabel><Radio name="due" />Finish:</CheckLabel>
                <DateBox $off>
                  <DateInput aria-label="Finish date" defaultValue="06.10.16" />
                  <DropButton $off aria-label="Pick finish date"><Caret color="#6e6e6e" /></DropButton>
                </DateBox>
                <DateBox $off><DateInput aria-label="Finish time" defaultValue="17:00" /></DateBox>
                <CheckLabel><Check />Fix</CheckLabel>
              </DueGrid>
            </Fieldset>
            <CheckLabel $height={32} $pad={13}><Check />Mark as milestone</CheckLabel>
          </Column>
          <Column $width={217}>
            <CalendarLabel htmlFor="calendar">Activity calendar:</CalendarLabel>
            <CalendarRow>
              <SelectFrame $width={186}>
                <Select id="calendar"><option>Project calendar</option></Select>
                <Caret color="#6e6e6e" />
              </SelectFrame>
              <MoreButton>...</MoreButton>
            </CalendarRow>
            <OptionList>
              <CheckLabel><Check />Disregard team and employee calendar</CheckLabel>
              <CheckLabel><Check />Start of activity only at first shift</CheckLabel>
              <CheckLabel><Check />Merge into one line</CheckLabel>
            </OptionList>
          </Column>
          <Column $width={182}>
            <MoneyRows $top={2}>
              <Amount id="completed" label="Completed:" value="21.05" unit="%" />
              <Amount id="fixedCosts" label="Fixed costs:" value="0" unit="€" />
            </MoneyRows>
            <MoneyFieldset>
              <Legend $line={8}>Financing</Legend>
              <MoneyRows $top={8}>
                <Amount id="invoice" label="Invoice amount:" value="0" unit="€" labelWidth={100} />
                <Amount id="term" label="Term of payment:" value="0" unit="work days" labelWidth={100} border="#8c8c8c" />
                <AmountRow $label={100}>
                  <AmountLabel htmlFor="receipt">Receipt:</AmountLabel>
                  <ReceiptBox>
                    <DateInput id="receipt" defaultValue="__.__.__" />
                    <DropButton $off aria-label="Pick receipt date"><Caret color="#6e6e6e" /></DropButton>
                  </ReceiptBox>
                </AmountRow>
              </MoneyRows>
            </MoneyFieldset>
          </Column>
          <ColorField>
            <FieldLabel htmlFor="color" $width={40} $gap={0}>Color:</FieldLabel>
            <SelectFrame $width={144} $border="#8c8c8c">
              <ColorChip />
              <Select id="color" $align="center"><option>Automatic color</option></Select>
              <Caret color="#6e6e6e" />
            </SelectFrame>
          </ColorField>
        </TabPanel>
      </TabArea>
      <DialogButtons>
        <DialogButton $primary>OK</DialogButton>
        <DialogButton>Cancel</DialogButton>
      </DialogButtons>
    </DetailBody>
  </Details>
);

const StatusIcons = () => (
  <>
    <StatusButton $active aria-label="Gantt view">
      <Svg width="15" height="15" stroke="#fff" fill="none">
        <rect x=".5" y=".5" width="14" height="14" />
        <path d="M1 2.500h13M3 6h6M6 10h7" strokeWidth="2" />
      </Svg>
    </StatusButton>
    <StatusButton aria-label="Resource view">
      <Svg width="16" height="16">
        <rect x=".5" y=".5" width="14" height="14" fill="none" stroke="#fff" />
        <path d={dots(14, 15, 3, 3)} fill="#fff" />
        <rect x="9" y="7" width="7" height="9" fill="#2b579a" />
        <Person x={9.500} y={7} s={0.55} color="#fff" />
      </Svg>
    </StatusButton>
    <StatusButton aria-label="Load view">
      <Svg width="16" height="16">
        <path d="M.5 15V.5h14V6M0 14.500h8" fill="none" stroke="#fff" />
        <path d="M2 5h2v8H2zM5 8h2v5H5z" fill="#fff" />
        <Person x={9} y={7} s={0.55} color="#fff" />
      </Svg>
    </StatusButton>
  </>
);

const App = () => (
  <Window>
    <GlobalStyle />
    <Header>
      <HeaderLeft>
        <QuickBar>
          <QuickButton $width={18} aria-label="Application"><AppIcon /></QuickButton>
          <QuickButton $width={16} aria-label="Open"><FolderIcon /></QuickButton>
          <QuickButton aria-label="Save"><SaveIcon /></QuickButton>
          <QuickButton aria-label="Undo"><UndoIcon /></QuickButton>
          <QuickButton aria-label="Redo"><UndoIcon redo /></QuickButton>
          <QuickButton $width={5} aria-label="Customize">
            <Svg width="5" height="6">
              <path d="M0 0h5v1H0zM0 3h5v1H4v1H3v1H2V5H1V4H0z" fill="#0a62c4" />
            </Svg>
          </QuickButton>
        </QuickBar>
        <RibbonTabs>
          <FileTab>FILE</FileTab>
          <ActiveTab>START</ActiveTab>
          <PlainTab>PROJECT</PlainTab>
        </RibbonTabs>
      </HeaderLeft>
      <ContextTab>
        <ContextTitle>GANTT CHART</ContextTitle>
        <RibbonTab>FORMAT</RibbonTab>
      </ContextTab>
      <Title>Building planning</Title>
      <HeaderRight>
        <WindowButtons>
          <button aria-label="Minimize">
            <Svg width="7" height="11"><rect y="7" width="6" height="2" fill="#555" /></Svg>
          </button>
          <button aria-label="Maximize">
            <Svg width="9" height="9"><rect x=".5" y=".5" width="8" height="8" fill="none" stroke="#555" /></Svg>
          </button>
          <button aria-label="Close">
            <SmoothSvg width="9" height="9"><path d="M1 1L8 8M8 1L1 8" stroke="#555" strokeWidth="1.500" /></SmoothSvg>
          </button>
        </WindowButtons>
        <button aria-label="Collapse ribbon">
          <SmoothSvg width="9" height="6"><path d="M1 5L4.500 1.500L8 5" fill="none" stroke="#666" strokeWidth="2" /></SmoothSvg>
        </button>
      </HeaderRight>
    </Header>
    <Ribbon />
    <Main>
      <TablePane>
        <CutoffBar>
          <CutoffText>Cutoff date: 07.09.16 08:00</CutoffText>
          <CollapseButton>&lt;&lt;</CollapseButton>
        </CutoffBar>
        <ActivityTable />
        <HScroll>
          <ScrollButton aria-label="Scroll left"><Triangle dir="left" /></ScrollButton>
          <HThumb />
        </HScroll>
      </TablePane>
      <Splitter />
      <ChartPane>
        <ChartHeader />
        <Chart />
        <HScroll $end>
          <ScrollButton aria-label="Scroll right"><Triangle dir="right" /></ScrollButton>
        </HScroll>
      </ChartPane>
      <VScroll>
        <ScrollButton aria-label="Scroll up"><Triangle dir="up" /></ScrollButton>
        <VThumb />
        <Spring />
        <ScrollButton aria-label="Scroll down"><Triangle dir="down" /></ScrollButton>
      </VScroll>
    </Main>
    <BottomSplitter />
    <DetailForm />
    <StatusBar>
      RESOURCE POOL: http://localhost/ris6/21
      <Spring />
      <StatusIcons />
      <Scale>WEEK 1 : 3 <Caret /></Scale>
      <ZoomButton aria-label="Zoom out">−</ZoomButton>
      <ZoomSlider aria-label="Zoom" defaultValue={39} />
      <ZoomButton aria-label="Zoom in">+</ZoomButton>
      <Svg width="10" height="9">
        <path d="M6 0h2v2H6zM3 3h2v2H3zM6 3h2v2H6zM0 6h2v2H0zM3 6h2v2H3zM6 6h2v2H6z" fill="#fff" />
      </Svg>
    </StatusBar>
    <CalloutArrows stroke="#c4009c" strokeWidth="4" fill="#c4009c">
      <path d="M586 554L273 336" strokeDasharray="12 4 4 4" />
      <path d="M264 330L283 333L275 337L273 345z" stroke="none" />
      <path d="M598 606L577 752" strokeDasharray="12 4 4 4" />
      <path d="M575 763L570 746L577 751L586 748z" stroke="none" />
    </CalloutArrows>
    <CalloutText>
      percentage of completion method
      <br />
      for duration or as a completed
    </CalloutText>
  </Window>
);

export default App;
